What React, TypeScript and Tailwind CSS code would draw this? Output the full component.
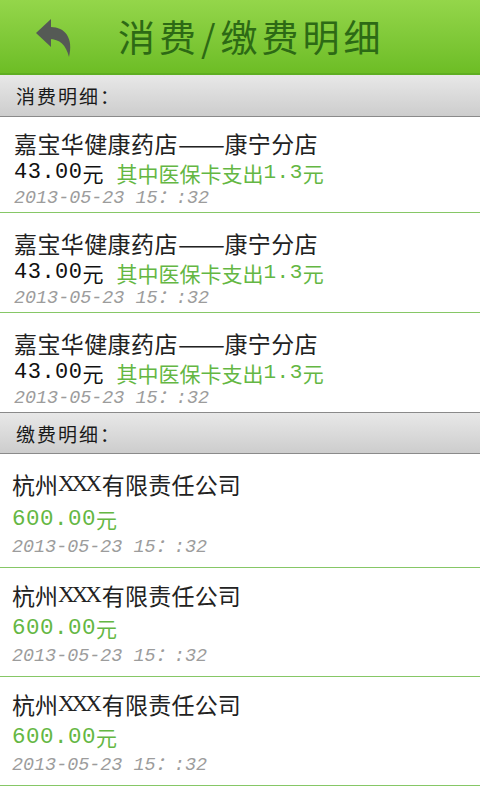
import React from "react";

function BackArrow() {
  return (
    <svg width="40" height="44" viewBox="34 16 40 44" className="block">
      <path d="M36 33 L51 19 L51 47 Z" fill="#555a55" />
      <path d="M49 27 C 64 26, 74 37, 69 57 C 66 45, 60 39, 49 39 Z" fill="#555a55" />
    </svg>
  );
}

function SectionHeader({ label, topBorder }: { label: string; topBorder?: boolean }) {
  return (
    <div
      className={
        topBorder
          ? "h-[42px] bg-gradient-to-b from-[#e8e8e8] to-[#cdcdcd] border-t border-b border-[#8a8a8a] flex items-center pl-[16px]"
          : "h-[42px] bg-gradient-to-b from-[#e8e8e8] to-[#cdcdcd] border-b border-[#8a8a8a] flex items-center pl-[16px]"
      }
    >
      <span className="font-['Noto_Sans_CJK_SC',sans-serif] text-[19px] tracking-[2px] text-[#1a1a1a] leading-none">
        {label}
      </span>
    </div>
  );
}

function DateLine({ extra }: { extra?: boolean }) {
  return (
    <div
      className={
        extra
          ? "mt-[3px] h-[22px] leading-[22px] font-['Liberation_Mono','Noto_Sans_CJK_SC',monospace] text-[18.4px] italic text-[#9c9c9c] whitespace-nowrap"
          : "h-[22px] leading-[22px] font-['Liberation_Mono','Noto_Sans_CJK_SC',monospace] text-[18.4px] italic text-[#9c9c9c] whitespace-nowrap"
      }
    >
      2013-05-23 15：:32
    </div>
  );
}

function Consume({ first, last }: { first?: boolean; last?: boolean }) {
  const pad = first ? "pt-[11px]" : "pt-[15px]";
  return (
    <div className={`px-[14px] ${pad} pb-[2px] ${last ? "" : "border-b border-[#86c766]"}`}>
      <div className="h-[30px] leading-[30px] font-['Noto_Sans_CJK_SC',sans-serif] text-[23px] tracking-[0.4px] text-[#222] whitespace-nowrap">
        嘉宝华健康药店
        <span className="inline-block tracking-[0px] scale-x-[1.22] origin-left mr-[8px]">——</span>
        康宁分店
      </div>
      <div className="h-[30px] leading-[30px] whitespace-nowrap flex items-center">
        <span className="font-['Liberation_Mono',monospace] text-[22px] tracking-[0.5px] text-[#111]">
          43.00
        </span>
        <span className="font-['Noto_Sans_CJK_SC',sans-serif] text-[21px] text-[#111]">元</span>
        <span className="ml-[13px] font-['Noto_Sans_CJK_SC',sans-serif] text-[21px] text-[#64b743]">
          其中医保卡支出
        </span>
        <span className="font-['Liberation_Mono',monospace] text-[21px] tracking-[0.5px] text-[#64b743]">
          1.3
        </span>
        <span className="font-['Noto_Sans_CJK_SC',sans-serif] text-[21px] text-[#64b743]">元</span>
      </div>
      <DateLine />
    </div>
  );
}

function Payment({ first }: { first?: boolean }) {
  return (
    <div className={`px-[12px] ${first ? "pt-[15px]" : "pt-[12px]"} pb-[8px] border-b border-[#86c766]`}>
      <div className="h-[30px] leading-[30px] font-['Noto_Sans_CJK_SC',sans-serif] text-[23px] text-[#222] whitespace-nowrap flex items-center">
        <span>杭州</span>
        <span className="font-['Liberation_Serif',serif] text-[23px] tracking-[-3px] mr-[3px]">XXX</span>
        <span className="tracking-[0.2px]">有限责任公司</span>
      </div>
      <div className={`h-[30px] leading-[30px] whitespace-nowrap flex items-center ${first ? "mt-[5px]" : "mt-[3px]"}`}>
        <span className="font-['Liberation_Mono',monospace] text-[22.5px] tracking-[0.5px] text-[#64b743]">
          600.00
        </span>
        <span className="font-['Noto_Sans_CJK_SC',sans-serif] text-[21px] text-[#64b743]">元</span>
      </div>
      <DateLine extra />
    </div>
  );
}

export default function App() {
  return (
    <div className="w-[480px] h-[800px] bg-white overflow-hidden">
      <div className="h-[75px] bg-gradient-to-b from-[#94d64a] to-[#6dbd25] border-b-2 border-[#5fae22] flex items-center">
        <div className="ml-[34px] mt-[2px]">
          <BackArrow />
        </div>
        <div className="ml-[44px] font-['Noto_Sans_CJK_SC',sans-serif] text-[37px] leading-none tracking-[4px] text-[#2d6a15] whitespace-nowrap">
          消费<span className="mx-[1px]">/</span>缴费明细
        </div>
      </div>
      <SectionHeader label="消费明细：" />
      <Consume first />
      <Consume />
      <Consume last />
      <SectionHeader label="缴费明细：" topBorder />
      <Payment first />
      <Payment />
      <Payment />
    </div>
  );
}
